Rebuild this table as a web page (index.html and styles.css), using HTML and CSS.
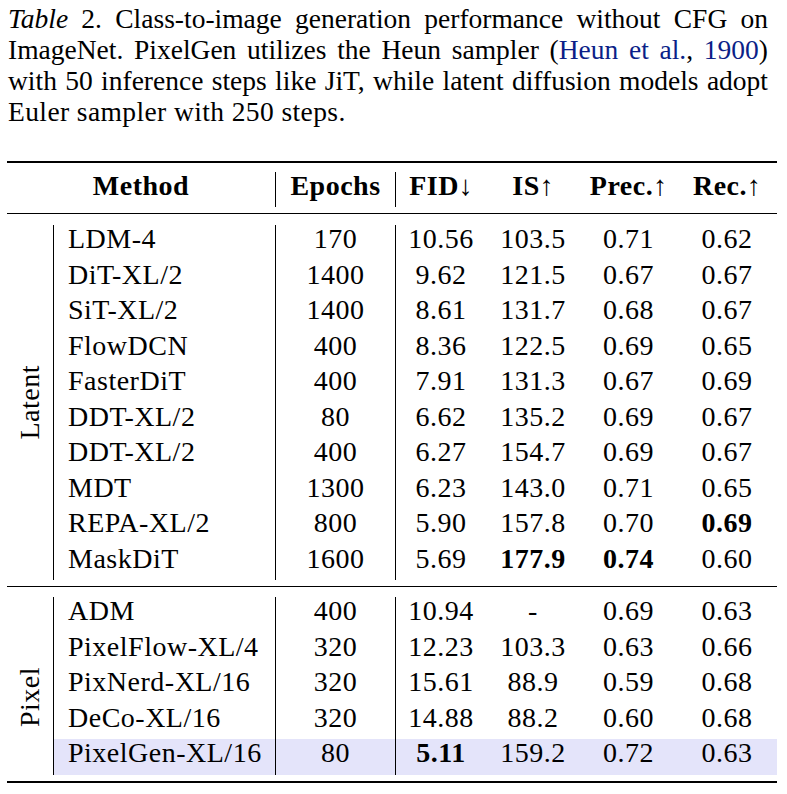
FILE: index.html
```html
<!DOCTYPE html>
<html>
<head>
<meta charset="utf-8">
<link rel="stylesheet" href="styles.css">
</head>
<body>
<div class="page">
  <p class="caption">
    <span class="cl"><i>Table</i> 2. Class-to-image generation performance without CFG on</span>
    <span class="cl">ImageNet. PixelGen utilizes the Heun sampler (<span class="cite">Heun et al.</span>, <span class="cite">1900</span>)</span>
    <span class="cl">with 50 inference steps like JiT, while latent diffusion models adopt</span>
    <span class="cl last">Euler sampler with 250 steps.</span>
  </p>

  <div class="tbl">
    <div class="rule heavy"></div>
    <div class="head">
      <div class="h-method">Method</div>
      <div class="vl">Epochs</div>
      <div class="vl">FID<span class="arr">↓</span></div>
      <div>IS<span class="arr">↑</span></div>
      <div>Prec.<span class="arr">↑</span></div>
      <div>Rec.<span class="arr">↑</span></div>
    </div>
    <div class="rule light"></div>

    <div class="group latent">
      <div class="glabel"><span>Latent</span></div>
      <div class="rows">
        <div class="row"><div class="m">LDM-4</div><div class="vl">170</div><div class="vl">10.56</div><div>103.5</div><div>0.71</div><div>0.62</div></div>
        <div class="row"><div class="m">DiT-XL/2</div><div class="vl">1400</div><div class="vl">9.62</div><div>121.5</div><div>0.67</div><div>0.67</div></div>
        <div class="row"><div class="m">SiT-XL/2</div><div class="vl">1400</div><div class="vl">8.61</div><div>131.7</div><div>0.68</div><div>0.67</div></div>
        <div class="row"><div class="m">FlowDCN</div><div class="vl">400</div><div class="vl">8.36</div><div>122.5</div><div>0.69</div><div>0.65</div></div>
        <div class="row"><div class="m">FasterDiT</div><div class="vl">400</div><div class="vl">7.91</div><div>131.3</div><div>0.67</div><div>0.69</div></div>
        <div class="row"><div class="m">DDT-XL/2</div><div class="vl">80</div><div class="vl">6.62</div><div>135.2</div><div>0.69</div><div>0.67</div></div>
        <div class="row"><div class="m">DDT-XL/2</div><div class="vl">400</div><div class="vl">6.27</div><div>154.7</div><div>0.69</div><div>0.67</div></div>
        <div class="row"><div class="m">MDT</div><div class="vl">1300</div><div class="vl">6.23</div><div>143.0</div><div>0.71</div><div>0.65</div></div>
        <div class="row"><div class="m">REPA-XL/2</div><div class="vl">800</div><div class="vl">5.90</div><div>157.8</div><div>0.70</div><div><b>0.69</b></div></div>
        <div class="row"><div class="m">MaskDiT</div><div class="vl">1600</div><div class="vl">5.69</div><div><b>177.9</b></div><div><b>0.74</b></div><div>0.60</div></div>
      </div>
    </div>
    <div class="rule light"></div>

    <div class="group pixel">
      <div class="glabel"><span>Pixel</span></div>
      <div class="rows">
        <div class="row"><div class="m">ADM</div><div class="vl">400</div><div class="vl">10.94</div><div>-</div><div>0.69</div><div>0.63</div></div>
        <div class="row"><div class="m">PixelFlow-XL/4</div><div class="vl">320</div><div class="vl">12.23</div><div>103.3</div><div>0.63</div><div>0.66</div></div>
        <div class="row"><div class="m">PixNerd-XL/16</div><div class="vl">320</div><div class="vl">15.61</div><div>88.9</div><div>0.59</div><div>0.68</div></div>
        <div class="row"><div class="m">DeCo-XL/16</div><div class="vl">320</div><div class="vl">14.88</div><div>88.2</div><div>0.60</div><div>0.68</div></div>
        <div class="row ours"><div class="m">PixelGen-XL/16</div><div class="vl">80</div><div class="vl"><b>5.11</b></div><div>159.2</div><div>0.72</div><div>0.63</div></div>
      </div>
    </div>
    <div class="rule heavy"></div>
  </div>
</div>
</body>
</html>
```

FILE: styles.css
```css
html, body {
  margin: 0;
  padding: 0;
  background: #fff;
}

.page {
  padding: 0 10px 0 7px;
  font-family: "Liberation Serif", "Times New Roman", serif;
  font-size: 28px;
  letter-spacing: 0.5px;
  color: #000;
}

.caption {
  margin: 0 0 0 1px;
  padding-top: 3px;
  width: 760px;
  font-size: 27.5px;
  letter-spacing: 0;
  line-height: 31px;
}

.cl {
  display: block;
  white-space: nowrap;
  text-align: justify;
  text-align-last: justify;
}

.cl.last {
  text-align-last: left;
  letter-spacing: 0.4px;
}

.cite {
  color: #0c1f88;
}

.tbl {
  margin-top: 34px;
  width: 770px;
}

.rule {
  background: #000;
}

.rule.heavy {
  height: 2px;
}

.rule.light {
  height: 1px;
}

.head {
  display: grid;
  grid-template-columns: 268px 120px 91px 94px 97px 100px;
  margin: 9px 0 6px;
  font-weight: bold;
  text-align: center;
  line-height: 28.5px;
}

.head > div {
  padding-bottom: 6.5px;
}

.arr {
  font-weight: normal;
  letter-spacing: 0;
}

.vl {
  border-left: 1px solid #000;
}

.group {
  display: flex;
}

.latent {
  padding: 11px 0 6px;
}

.pixel {
  padding: 10px 0 6px;
}

.glabel {
  width: 46px;
  display: flex;
  align-items: center;
  justify-content: center;
}

.glabel span {
  writing-mode: vertical-rl;
  transform: rotate(180deg);
  line-height: 28px;
}

.pixel .glabel {
  padding-top: 22px;
}

.rows {
  flex: 1;
}

.row {
  display: grid;
  grid-template-columns: 222px 120px 91px 94px 97px 100px;
  text-align: center;
}

.row > div {
  line-height: 28.5px;
  padding-bottom: 7px;
}

.row > .m {
  text-align: left;
  border-left: 1px solid #000;
  padding-left: 14px;
}

.row.ours {
  background: #e4e4fa;
}
```
